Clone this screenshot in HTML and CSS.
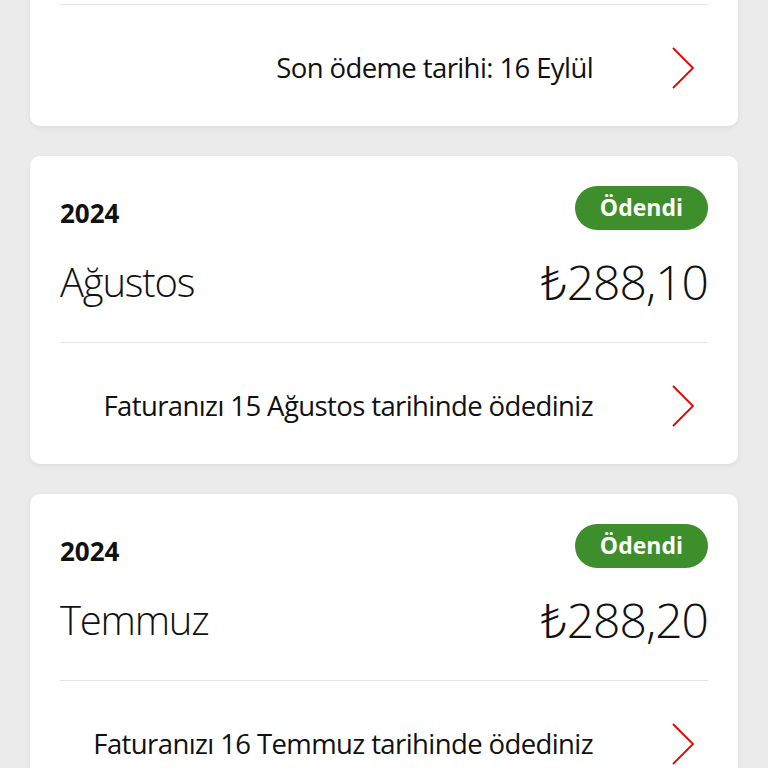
FILE: index.html
```html
<!DOCTYPE html>
<html lang="tr">
<head>
<meta charset="utf-8">
<link rel="stylesheet" href="styles.css">
</head>
<body>
<div class="list">
  <div class="card card-cut">
    <div class="cut-spacer"></div>
    <div class="footer">
      <span class="footer-text">Son ödeme tarihi: 16 Eylül</span>
      <svg class="chev" viewBox="0 0 24 44" width="24" height="44"><path d="M2 2 L22 22 L2 42" fill="none" stroke="#e60000" stroke-width="1.8"/></svg>
    </div>
  </div>

  <div class="card">
    <div class="head">
      <span class="year">2024</span>
      <span class="badge">Ödendi</span>
    </div>
    <div class="main">
      <span class="month">Ağustos</span>
      <span class="amount">₺288,10</span>
    </div>
    <div class="footer">
      <span class="footer-text">Faturanızı 15 Ağustos tarihinde ödediniz</span>
      <svg class="chev" viewBox="0 0 24 44" width="24" height="44"><path d="M2 2 L22 22 L2 42" fill="none" stroke="#e60000" stroke-width="1.8"/></svg>
    </div>
  </div>

  <div class="card">
    <div class="head">
      <span class="year">2024</span>
      <span class="badge">Ödendi</span>
    </div>
    <div class="main">
      <span class="month">Temmuz</span>
      <span class="amount">₺288,20</span>
    </div>
    <div class="footer">
      <span class="footer-text">Faturanızı 16 Temmuz tarihinde ödediniz</span>
      <svg class="chev" viewBox="0 0 24 44" width="24" height="44"><path d="M2 2 L22 22 L2 42" fill="none" stroke="#e60000" stroke-width="1.8"/></svg>
    </div>
  </div>
</div>
</body>
</html>
```
FILE: styles.css
```css
html, body {
  margin: 0;
  padding: 0;
  background: #ebebeb;
  font-family: "Open Sans", "Noto Sans", sans-serif;
  color: #111;
}
.list {
  display: flex;
  flex-direction: column;
  gap: 30px;
  padding: 0 30px;
  margin-top: -20px;
}
.card {
  background: #fff;
  border-radius: 10px;
  padding: 30px 30px 0;
  box-shadow: 0 2px 6px rgba(0,0,0,0.06);
}
.card-cut {
  padding-top: 0;
}
.cut-spacer {
  height: 24px;
  border-bottom: 1px solid #e4e4e4;
}
.head {
  display: flex;
  justify-content: space-between;
  align-items: flex-end;
  height: 44px;
}
.year {
  font-size: 26px;
  font-weight: 700;
  line-height: 34px;
}
.badge {
  background: #3e8e2b;
  color: #fff;
  font-weight: 700;
  font-size: 23px;
  height: 44px;
  line-height: 42px;
  padding: 0 25px;
  border-radius: 22px;
}
.main {
  display: flex;
  justify-content: space-between;
  align-items: center;
  height: 60px;
  margin-top: 21px;
  padding-bottom: 31px;
  border-bottom: 1px solid #e4e4e4;
}
.month {
  font-size: 40px;
  font-weight: 300;
  letter-spacing: -1.2px;
}
.amount {
  font-size: 48px;
  font-weight: 300;
  letter-spacing: -1px;
}
.footer {
  display: flex;
  justify-content: flex-end;
  align-items: center;
  height: 117px;
  padding-top: 4px;
}
.footer-text {
  font-size: 27.5px;
  letter-spacing: -0.6px;
}
.chev {
  margin-left: 78px;
  margin-right: 13px;
  flex: none;
}
```
